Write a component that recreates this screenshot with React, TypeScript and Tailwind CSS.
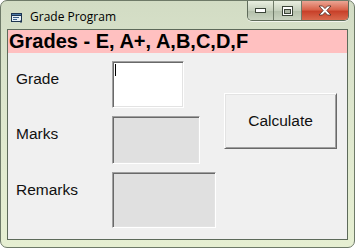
function TitleIcon() {
  return (
    <svg width="13" height="12" viewBox="0 0 13 12" className="shrink-0">
      <rect x="1.5" y="2.5" width="10" height="8" fill="#e6f0f6" stroke="#1f3550" />
      <rect x="1.5" y="2.5" width="10" height="2" fill="#4a7aa8" stroke="#1f3550" />
      <path d="M3 6.5h6M3 8.5h4" stroke="#3a5f88" />
      <rect x="10" y="9.5" width="2" height="2" fill="#1f3550" />
    </svg>
  );
}

function CaptionButtons() {
  return (
    <div className="flex h-[20px] overflow-hidden rounded-b-[5px] border border-t-0 border-[#5f6b5a] shadow-[0_1px_0_rgba(255,255,255,0.7)]">
      <div className="flex w-[26px] items-center justify-center border-r border-[#6f7a68] bg-[linear-gradient(180deg,#e9efe0_0%,#c6d0bd_50%,#b3bfaa_51%,#c9d3c0_100%)]">
        <svg width="11" height="5" viewBox="0 0 11 5">
          <rect x="0.5" y="0.5" width="10" height="4" fill="#fff" stroke="#3b4438" />
        </svg>
      </div>
      <div className="flex w-[28px] items-center justify-center border-r border-[#6f7a68] bg-[linear-gradient(180deg,#e9efe0_0%,#c6d0bd_50%,#b3bfaa_51%,#c9d3c0_100%)]">
        <svg width="11" height="10" viewBox="0 0 11 10">
          <rect x="0.5" y="0.5" width="10" height="9" fill="#fff" stroke="#3b4438" />
          <rect x="2.5" y="3.5" width="6" height="4" fill="#aab4a2" stroke="#3b4438" />
        </svg>
      </div>
      <div className="flex w-[46px] items-center justify-center bg-[linear-gradient(180deg,#eba594_0%,#d9644c_45%,#c8412a_55%,#d96a4e_100%)]">
        <svg width="14" height="11" viewBox="0 0 14 11">
          <path
            d="M1 1h3.5L7 3.6 9.5 1H13L8.8 5.5 13 10H9.5L7 7.4 4.5 10H1l4.2-4.5z"
            fill="#fff"
            stroke="#4a2a22"
            strokeWidth="0.8"
          />
        </svg>
      </div>
    </div>
  );
}

function Sunken({ className, children }: { className: string; children?: React.ReactNode }) {
  return (
    <div
      className={`border border-t-[#a0a0a0] border-l-[#a0a0a0] border-b-white border-r-white shadow-[inset_1px_1px_0_#696969,inset_-1px_-1px_0_#e3e3e3] ${className}`}
    >
      {children}
    </div>
  );
}

export default function App() {
  return (
    <div className="h-[248px] w-[355px] bg-white font-['Liberation_Sans',Arial,sans-serif]">
      <div className="flex h-full w-full flex-col rounded-[7px] border border-[#6e7a68] bg-[linear-gradient(180deg,#d2dcc4_0%,#dbe4cc_30%,#e2ebd0_70%,#e6efd2_100%)] px-[6px] pb-[7px]">
        {/* Title bar */}
        <div className="flex h-[28px] shrink-0 items-start justify-between">
          <div className="flex items-center gap-[7px] pl-[3px] pt-[9px]">
            <TitleIcon />
            <span className="font-['Open_Sans','Noto_Sans',sans-serif] text-[12px] leading-[14px] text-black">
              Grade Program
            </span>
          </div>
          <div className="mr-[-1px]">
            <CaptionButtons />
          </div>
        </div>

        {/* Client area */}
        <div className="flex flex-1 flex-col border border-[#5d6a5a] bg-[#f0f0f0]">
          <div className="h-[23px] bg-[#ffc0c0] pl-[1px] text-[20px] font-bold leading-[23px] text-black">
            Grades - E, A+, A,B,C,D,F
          </div>

          <div className="flex gap-[8px] pl-[8px] pt-[8px]">
            <div className="flex flex-col gap-[8px]">
              <div className="flex items-start">
                <span className="w-[96px] pt-[9px] text-[15.5px] leading-[17px] text-[#111]">Grade</span>
                <Sunken className="h-[47px] w-[72px] bg-white">
                  <div className="ml-[2px] mt-[2px] h-[12px] w-[1px] bg-black" />
                </Sunken>
              </div>
              <div className="flex items-start">
                <span className="w-[96px] pt-[9px] text-[15.5px] leading-[17px] text-[#111]">Marks</span>
                <Sunken className="h-[48px] w-[88px] bg-[#e0e0e0]" />
              </div>
              <div className="flex items-start">
                <span className="w-[96px] pt-[9px] text-[15.5px] leading-[17px] text-[#111]">Remarks</span>
                <Sunken className="h-[56px] w-[104px] bg-[#e0e0e0]" />
              </div>
            </div>
            <button className="mt-[32px] flex h-[56px] w-[113px] items-center justify-center border border-t-white border-l-white border-b-[#696969] border-r-[#696969] bg-[#f0f0f0] text-[15.5px] text-[#111] shadow-[inset_1px_1px_0_#e3e3e3,inset_-1px_-1px_0_#a0a0a0]">
              Calculate
            </button>
          </div>
        </div>
      </div>
    </div>
  );
}
